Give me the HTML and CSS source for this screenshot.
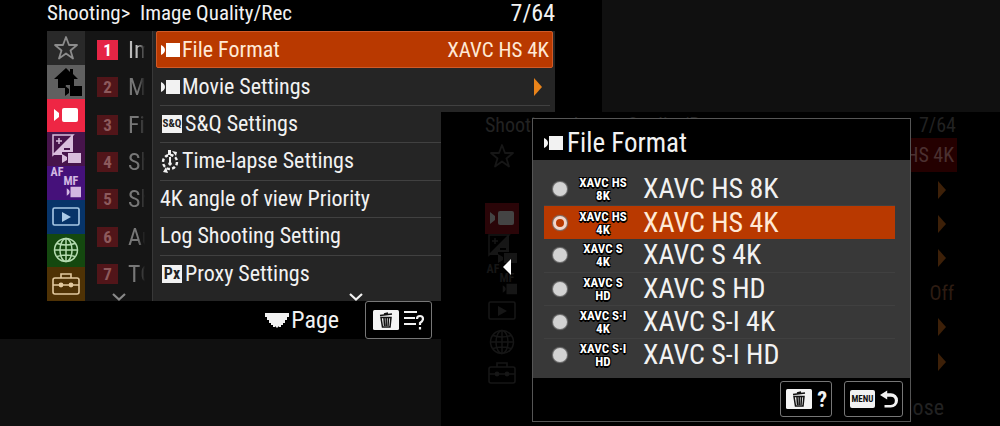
FILE: index.html
```html
<!DOCTYPE html>
<html lang="en">
<head>
<meta charset="utf-8">
<title>Camera menu</title>
<link rel="stylesheet" href="styles.css">
</head>
<body>
<svg class="sprite" aria-hidden="true">
  <symbol id="movie" viewBox="0 0 20 16"><path d="M1 3v10q4-2 4-5T1 3Z"/><path d="M6 1h14v14H6z"/></symbol>
  <symbol id="movie-tab" viewBox="0 0 24 14"><path d="M0 1l5 4v4l-5 4Z"/><rect x="8" width="16" height="14" rx="2"/></symbol>
  <symbol id="star" viewBox="0 0 26 26"><path d="M13 2l3 8h8l-6.500 5.500 2.500 8L13 18.500 6 23.500l2.500-8L2 10h8Z" fill="none" stroke="currentColor" stroke-width="1.800" stroke-linejoin="round"/></symbol>
  <symbol id="home" viewBox="0 0 32 32"><path d="M16 2L4 13h4v9h7l1-3h4v2h4v-8h4l-5-5V3h-3v3Z"/><path d="M15 20l4 3v4l-4 3ZM20 20h12v10H20Z"/></symbol>
  <symbol id="exposure" viewBox="0 0 32 32"><path d="M3 2h20L3 22Z" fill="none" stroke="currentColor" stroke-width="1.500"/><path fill-rule="evenodd" d="M23 2v17H12v3H3ZM14 15v2h6v-2Z"/><path d="M6 8h6M9 5v6" stroke="currentColor" stroke-width="1.500"/><path d="M12 21l5 3v3l-5 3ZM18 20h13v10H18Z"/></symbol>
  <symbol id="play" viewBox="0 0 28 20"><rect x="1" y="1" width="26" height="17" rx="1.500" fill="none" stroke="currentColor" stroke-width="1.600"/><path d="M10 5l9 5-9 5Z"/></symbol>
  <symbol id="globe" viewBox="0 0 26 26"><g fill="none" stroke="currentColor" stroke-width="1.500"><circle cx="13" cy="13" r="11.500"/><ellipse cx="13" cy="13" rx="6" ry="11.500"/><path d="M13 1.500v23M1.500 13h23M4 6.500q9 3 18 0M4 19.500q9-3 18 0"/></g></symbol>
  <symbol id="toolbox" viewBox="0 0 28 24"><g fill="none" stroke="currentColor" stroke-width="1.600"><rect x="1" y="6" width="26" height="16" rx="2"/><path d="M9 6V2h10v4M1 13h26"/></g><circle cx="9" cy="13" r="2.400"/><circle cx="19" cy="13" r="2.400"/></symbol>
  <symbol id="timer" viewBox="0 0 18 24"><circle cx="9" cy="13" r="7" fill="none" stroke="currentColor" stroke-width="2.400" stroke-dasharray="3.300 2.200"/><path d="M7 1h3v5H7ZM8 8h2v5l1 2-2 2-2-2 1-2Z"/><path d="M11 2l5 1-1 4ZM7 24l-5-1 3-5Z"/></symbol>
  <symbol id="dial" viewBox="0 0 24 15"><path d="M0 0h24v4h-2v3h-2v3h-2v2h-2v2h-2v-1l-2 2-2-2v1H8v-2H6v-2H4V7H2V4H0Z"/></symbol>
  <symbol id="trash" viewBox="0 0 26 20"><rect width="26" height="20" rx="1.500" fill="#f4f4f4"/><g fill="none" stroke="#111" stroke-width="1.500"><path d="M7 5.500l12-1.500M11 4l4-1M8 7.500h10l-1 9.500H9.500ZM11 8l.5 8M13.200 8v8M15.500 8l-.5 8"/></g></symbol>
  <symbol id="help-list" viewBox="0 0 20 20"><g fill="none" stroke="currentColor" stroke-width="2.200"><path d="M0 2h13M0 8h11M0 14h12"/><path d="M13 9q0-3 3-3t3 3q0 2-3 4v2M16 17v2.500"/></g></symbol>
  <symbol id="chevron" viewBox="0 0 14 8"><path d="M1 1l6 5.500L13 1" fill="none" stroke="currentColor" stroke-width="2.200"/></symbol>
  <symbol id="right" viewBox="0 0 8 20"><path d="M0 1l8 9-8 9Z"/></symbol>
  <symbol id="left" viewBox="0 0 8 16"><path d="M8 0v16L0 8Z"/></symbol>
  <symbol id="back" viewBox="0 0 20 20"><path d="M0 5l8-5v3h4a7.500 7.500 0 0 1 0 16H5v-3h7a4.500 4.500 0 0 0 0-9H8v3Z"/></symbol>
</svg>

<main class="stage">
  <section class="screen" aria-label="Shooting menu">
    <header class="title"><h1>Shooting&gt;&nbsp; Image Quality/Rec</h1><span class="count">7/64</span></header>
    <div class="panel">
      <nav class="tabs" aria-label="Menu tabs">
        <button class="tab t-star" aria-label="My Menu"><svg class="i-star"><use href="#star"/></svg></button>
        <button class="tab t-home" aria-label="Main"><svg class="i-home"><use href="#home"/></svg></button>
        <button class="tab t-movie" aria-label="Shooting"><svg class="i-tab"><use href="#movie-tab"/></svg></button>
        <button class="tab t-exp" aria-label="Exposure"><svg class="i-home"><use href="#exposure"/></svg></button>
        <button class="tab t-focus"><span class="afmf"><b>AF</b><b>MF</b><svg class="i-small"><use href="#movie"/></svg></span></button>
        <button class="tab t-play" aria-label="Playback"><svg class="i-play"><use href="#play"/></svg></button>
        <button class="tab t-net" aria-label="Network"><svg class="i-star"><use href="#globe"/></svg></button>
        <button class="tab t-tool" aria-label="Setup"><svg class="i-tool"><use href="#toolbox"/></svg></button>
      </nav>
      <div class="groups">
        <button class="group on"><b>1</b><span>Im</span></button>
        <button class="group"><b>2</b><span>M</span></button>
        <button class="group"><b>3</b><span>Fil</span></button>
        <button class="group"><b>4</b><span>Sh</span></button>
        <button class="group"><b>5</b><span>Sh</span></button>
        <button class="group"><b>6</b><span>Au</span></button>
        <button class="group"><b>7</b><span>TC</span></button>
        <svg class="i-chev"><use href="#chevron"/></svg>
      </div>
      <div class="items">
        <button class="item on"><svg class="i-movie"><use href="#movie"/></svg><span>File Format</span><span class="value">XAVC HS 4K</span></button>
        <button class="item"><svg class="i-movie"><use href="#movie"/></svg><span>Movie Settings</span><svg class="i-right"><use href="#right"/></svg></button>
        <button class="item"><b class="chip">S&amp;Q</b><span>S&amp;Q Settings</span></button>
        <button class="item"><svg class="i-timer"><use href="#timer"/></svg><span>Time-lapse Settings</span></button>
        <button class="item"><span>4K angle of view Priority</span></button>
        <button class="item"><span>Log Shooting Setting</span></button>
        <button class="item"><b class="chip px">Px</b><span>Proxy Settings</span></button>
        <svg class="i-chev"><use href="#chevron"/></svg>
      </div>
    </div>
    <footer class="foot">
      <svg class="i-dial"><use href="#dial"/></svg><span>Page</span>
      <button class="key" aria-label="Help"><svg class="i-trash"><use href="#trash"/></svg><svg class="i-help"><use href="#help-list"/></svg></button>
    </footer>
  </section>

  <section class="popup" aria-label="File Format selection">
    <div class="behind" aria-hidden="true">
      <div class="dim-title"><span>Shooting&gt;&nbsp; Image Quality/Rec</span><span>7/64</span></div>
      <div class="dim-body">
        <div class="dim-tabs">
          <svg class="i-star"><use href="#star"/></svg>
          <i></i>
          <span class="dim-on"><svg class="i-tab"><use href="#movie-tab"/></svg></span>
          <svg class="i-home"><use href="#exposure"/></svg>
          <span class="afmf"><b>AF</b><b>MF</b><svg class="i-small"><use href="#movie"/></svg></span>
          <svg class="i-play"><use href="#play"/></svg>
          <svg class="i-star"><use href="#globe"/></svg>
          <svg class="i-tool"><use href="#toolbox"/></svg>
        </div>
        <svg class="i-left"><use href="#left"/></svg>
        <div class="dim-values">
          <span class="dim-sel">HS 4K</span>
          <svg class="i-right"><use href="#right"/></svg>
          <svg class="i-right"><use href="#right"/></svg>
          <svg class="i-right"><use href="#right"/></svg>
          <span>Off</span>
          <svg class="i-right"><use href="#right"/></svg>
          <svg class="i-right"><use href="#right"/></svg>
        </div>
      </div>
      <div class="dim-foot">Close</div>
    </div>
    <form class="dialog">
      <h2><svg class="i-head"><use href="#movie"/></svg>File Format</h2>
      <div class="options">
        <label class="option"><input type="radio" name="format"><b class="badge">XAVC HS<br>8K</b><span>XAVC HS 8K</span></label>
        <label class="option"><input type="radio" name="format" checked><b class="badge">XAVC HS<br>4K</b><span>XAVC HS 4K</span></label>
        <label class="option"><input type="radio" name="format"><b class="badge">XAVC S<br>4K</b><span>XAVC S 4K</span></label>
        <label class="option"><input type="radio" name="format"><b class="badge">XAVC S<br>HD</b><span>XAVC S HD</span></label>
        <label class="option"><input type="radio" name="format"><b class="badge">XAVC S·I<br>4K</b><span>XAVC S-I 4K</span></label>
        <label class="option"><input type="radio" name="format"><b class="badge">XAVC S·I<br>HD</b><span>XAVC S-I HD</span></label>
      </div>
      <div class="keys">
        <button type="button" class="key small"><svg class="i-trash"><use href="#trash"/></svg><b>?</b></button>
        <button type="button" class="key small" aria-label="Menu, back"><b class="menu">MENU</b><svg class="i-back"><use href="#back"/></svg></button>
      </div>
    </form>
  </section>
</main>
</body>
</html>
```
FILE: styles.css
```css
* { box-sizing: border-box; }
body {
  margin: 0;
  background: #101010;
  color: #f2f2f2;
  font-family: "Roboto Condensed", "Liberation Sans Narrow", Roboto, sans-serif;
}
button { border: 0; padding: 0; background: none; color: inherit; font: inherit; text-align: left; }
h1, h2 { margin: 0; font: inherit; }
svg { display: block; flex: none; fill: currentColor; }
.sprite { position: absolute; width: 0; height: 0; }

.stage {
  display: grid;
  grid-template-columns: 441fr 161fr 398fr;
  grid-template-rows: 112px 227px auto;
  min-height: 100vh;
}

.screen { grid-area: 1 / 1 / 3 / 3; background: #000; padding: 0 47px; display: flex; flex-direction: column; }
.title { display: flex; justify-content: space-between; height: 31px; font-size: 21px; line-height: 27px; white-space: nowrap; }
.count { font-size: 24px; }
.panel { display: grid; grid-template-columns: 38px 68px 1fr; height: 270px; }

.tabs { display: grid; grid-template-rows: repeat(8, minmax(0, 1fr)); }
.tab { display: grid; place-items: center; }
.t-star { background: #292929; color: #8c8c8c; }
.t-home { background: #606060; color: #000; }
.t-movie { background: #ee2644; color: #fff; }
.t-exp { background: #47144b; color: #d9bddc; }
.t-focus { background: #45117a; color: #d3b8e2; }
.t-play { background: #073469; color: #a9c9e6; }
.t-net { background: #14480f; color: #b4dbb0; }
.t-tool { background: #4f3205; color: #e3caa0; }
.afmf { display: grid; grid-template-columns: 13px 18px; font-size: 12px; line-height: 10px; }
.afmf b + b { grid-area: 2 / 2; line-height: 9px; }
.afmf svg { grid-area: 3 / 2; }

.groups, .items { display: grid; grid-template-rows: repeat(7, minmax(0, 1fr)) 8px; min-height: 0; }
.groups { background: #151515; border-right: 1px solid #383838; }
.groups .i-chev, .items .i-chev { justify-self: center; align-self: end; }
.groups .i-chev { color: #888; }
.group { display: flex; align-items: center; gap: 10px; padding-left: 12px; color: #777; font-size: 24px; }
.group b { width: 21px; background: #511519; color: #8d5a5c; font-size: 17px; line-height: 20px; text-align: center; }
.group span {
  width: 17px;
  overflow: hidden;
  white-space: nowrap;
  -webkit-mask-image: linear-gradient(90deg, #000 60%, transparent);
  mask-image: linear-gradient(90deg, #000 60%, transparent);
}
.group.on { color: #bbb; }
.group.on b { background: #e52545; color: #fff; }

.items { background: #252525; padding-left: 3px; }
.item {
  display: flex;
  align-items: center;
  gap: 2px;
  margin: 0 5px 0 4px;
  border-bottom: 1px solid #414141;
  font-size: 22px;
  line-height: 28px;
  white-space: nowrap;
}
.item:nth-child(7) { border-bottom: 0; }
.item.on { margin: 0 2px 0 0; padding: 0 3px; background: #b93900; border: 1px solid #d05a28; border-radius: 2px; color: #ffe9d6; }
.item.on svg { color: #fff; }
.value { margin-left: auto; font-size: 21px; }
.item .i-right { margin: 0 8px 0 auto; color: #e9831a; }
.chip { width: 20px; margin: 0 1px 0 2px; background: #f2f2f2; color: #222; font-size: 11px; line-height: 18px; text-align: center; }
.chip.px { font-size: 16px; }

.foot { display: flex; align-items: center; justify-content: flex-end; gap: 2px; height: 38px; padding-right: 123px; font-size: 24px; }
.key { display: flex; align-items: center; justify-content: center; gap: 5px; border: 1px solid #777; border-radius: 3px; background: #000; }
.foot .key { width: 67px; height: 38px; margin-left: 24px; }

.popup { grid-area: 2 / 2 / 4 / 4; display: grid; background: #000; }
.behind, .dialog { grid-area: 1 / 1; }
.behind { display: flex; flex-direction: column; padding: 0 44px; color: #222; font-size: 20px; white-space: nowrap; }
.dim-title { display: flex; justify-content: space-between; line-height: 26px; }
.dim-body { display: grid; grid-template-columns: 34px 1fr 60px; grid-template-rows: 250px; }
.dim-tabs { display: grid; grid-template-rows: repeat(8, minmax(0, 1fr)); place-items: center; grid-area: 1 / 1; padding-top: 3px; color: #161616; }
.dim-on { display: grid; place-items: center; width: 34px; height: 31px; background: #2a0508; color: #444; }
.i-left { grid-area: 1 / 1; place-self: center end; margin: 8px 8px 0 0; color: #fff; }
.dim-values { display: grid; grid-area: 1 / 3; grid-template-rows: repeat(7, minmax(0, 1fr)); align-items: center; justify-items: end; padding: 0 3px 9px 0; color: #3d2008; line-height: 34px; }
.dim-values .i-right { margin-right: 11px; }
.dim-values span { padding-right: 3px; color: #2d1c12; }
.dim-values .dim-sel { padding-left: 10px; background: #240000; color: #4b3030; }
.dim-foot { align-self: flex-end; padding-right: 12px; line-height: 40px; font-size: 22px; }

.dialog { margin: 6px 89px 6px 91px; display: flex; flex-direction: column; border: 1px solid #555; background: #000; }
.dialog h2 { display: flex; align-items: center; gap: 4px; height: 41px; padding: 6px 10px 0; font-size: 27px; }
.options { flex: 1; display: grid; grid-template-rows: repeat(6, minmax(0, 1fr)); padding: 13px 15px 6px 11px; background: #383838; }
.option { display: grid; grid-template-columns: 32px 54px 1fr; align-items: center; border-bottom: 1px solid #404040; font-size: 28px; line-height: 30px; white-space: nowrap; }
.option > span { padding-left: 13px; }
.option:has(:checked) { background: #b93900; border: 0; color: #ffe9d6; }
.option:last-child { border: 0; }
.option input { appearance: none; width: 14px; height: 14px; margin: 0 0 0 9px; border-radius: 50%; background: #d2d2d2; box-shadow: 0 0 1px 1px #777; }
.option input:checked { border: 3px solid #f2d6ca; background: #b93900; }
.badge {
  color: #fff;
  font-size: 13px;
  line-height: 13px;
  text-align: center;
  text-shadow: 1px 1px #000, -1px 1px #000, 1px -1px #000, -1px -1px #000, 0 2px #000;
}
.keys { display: flex; justify-content: flex-end; align-items: flex-start; gap: 12px; height: 43px; padding: 3px 7px; }
.key.small { height: 36px; padding: 0 4px 0 5px; font-size: 22px; }
.menu { width: 25px; border-radius: 2px; background: #f2f2f2; color: #111; font-size: 9px; line-height: 18px; text-align: center; }

.i-star { width: 26px; height: 26px; }
.i-home { width: 32px; height: 32px; }
.i-tab { width: 24px; height: 14px; }
.i-small { width: 19px; height: 12px; }
.i-play { width: 28px; height: 20px; }
.i-tool { width: 28px; height: 24px; }
.i-movie, .i-head { width: 20px; height: 16px; }
.i-timer { width: 20px; height: 24px; }
.i-right { width: 8px; height: 20px; }
.i-chev { width: 14px; height: 8px; }
.i-dial { width: 24px; height: 15px; }
.i-trash { width: 26px; height: 20px; }
.i-help { width: 20px; height: 20px; }
.i-left { width: 8px; height: 16px; }
.i-back { width: 18px; height: 19px; }
```
